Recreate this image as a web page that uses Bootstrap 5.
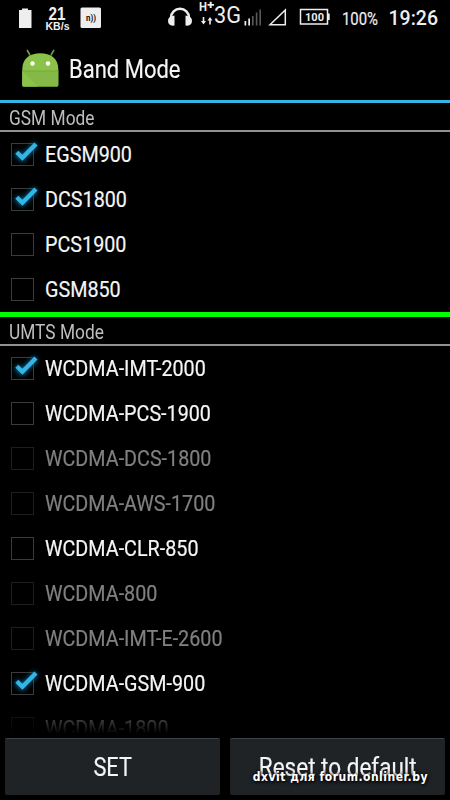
<!DOCTYPE html>
<html lang="en">
<head>
<meta charset="utf-8">
<meta name="viewport" content="width=device-width, initial-scale=1">
<title>Band Mode</title>
<link href="https://cdn.jsdelivr.net/npm/bootstrap@5.3.0/dist/css/bootstrap.min.css" rel="stylesheet">
<style>
html,body{height:100%}
body{background:#000;color:#f5f5f5;font-family:Roboto,"Liberation Sans",sans-serif;overflow:hidden}
.screen{width:450px;height:800px}
.status{height:36px;flex:none}
.status svg{display:block}
.titlebar{height:67px;flex:none;border-bottom:3px solid #33b5e5;padding:0 0 0 22px}
.narrow{display:inline-block;transform:scaleX(.88);transform-origin:0 50%;white-space:nowrap}
.title-text{font-size:25px;line-height:30px;margin-left:10px;padding-top:4px;-webkit-text-stroke:.15px}
.sect{height:29px;flex:none;padding:2px 0 0 9px;border-bottom:2px solid #929292;font-size:19.7px;line-height:27px;color:#bebebe}
.band{height:45px;flex:none;padding-left:11px;font-size:22.6px;line-height:45px}
.band .narrow{transform:translateY(.4px) scaleX(.874);-webkit-text-stroke:.2px}
.box{width:23px;height:23px;border:1px solid #3b3b3b;flex:none;margin-right:11px}
.box svg{display:block;overflow:visible;margin:-1px}
.off{color:#808080}
.off .box{border-color:#1e1e1e}
.green{height:5px;flex:none;background:#0f0}
.bands{height:387px;flex:none;-webkit-mask-image:linear-gradient(#000 358px,transparent 388px);mask-image:linear-gradient(#000 358px,transparent 388px)}
.actions{padding:5px;gap:10px}
.act{height:57px;background:#1f2326;border:0;border-top:1px solid #3f4346;border-radius:2px;color:#f5f5f5;font-size:25.6px;line-height:56px;padding:0}
.act .narrow{transform-origin:50% 50%;-webkit-text-stroke:.15px}
.act .short{transform:scaleX(.85)}
.watermark{right:22px;bottom:13px;font:bold 12px/20px "DejaVu Sans Condensed","DejaVu Sans",sans-serif;letter-spacing:.5px;color:#fff;text-shadow:1px 1px 3px #000,0 0 4px #000;white-space:nowrap}
</style>
<script src="https://cdn.jsdelivr.net/npm/bootstrap@5.3.0/dist/js/bootstrap.bundle.min.js"></script>
</head>
<body>
<svg width="0" height="0" class="position-absolute" aria-hidden="true">
<defs><filter id="glow" x="-50%" y="-50%" width="200%" height="200%"><feGaussianBlur stdDeviation="2.5"/></filter>
<g id="tick"><path d="M5.3 9.5L11 15.500L25 1" fill="none" stroke="#0876a8" stroke-width="5" filter="url(#glow)"/><path d="M5.800 9.300L11.400 14.800L25 1" fill="none" stroke="#33b5e5" stroke-width="4.300"/></g></defs>
</svg>
<main class="screen d-flex flex-column position-relative overflow-hidden">
<header class="status">
<svg width="450" height="36" fill="#eee" font-family="Roboto,sans-serif">
<path d="M19 10h3V8.500h6V10h3.500v18H19z"/>
<g font-family="Liberation Sans,sans-serif" font-weight="bold"><text x="48.500" y="19.500" font-size="18" textLength="17" lengthAdjust="spacingAndGlyphs">21</text><text x="45.500" y="30" font-size="10.500" textLength="24" lengthAdjust="spacingAndGlyphs">KB/s</text></g>
<rect x="80.500" y="7.500" width="20.500" height="20.500" rx="1.500"/>
<text x="86" y="21" font-size="9" font-weight="bold" fill="#111" textLength="10" lengthAdjust="spacingAndGlyphs">n))</text>
<path d="M171 19v-1.500a9 8.800 0 0 1 18 0v1.500" fill="none" stroke="#eee" stroke-width="2.500"/>
<path d="M174.500 15.500v10q-6.500 1-6.500-5q0-4 6.500-5zM185.500 15.500v10q6.500 1 6.500-5q0-4-6.500-5z"/>
<text x="199" y="11" font-size="12" font-weight="bold" textLength="8" lengthAdjust="spacingAndGlyphs">H</text>
<path d="M207.500 4h2.200V1.800h2V4h2.300v1.700h-2.300V8h-2V5.700h-2.200zM202.700 17h1.600v4h1.700l-2.500 3.500-2.500-3.500h1.700zM209.200 24.500h1.600V20.500h1.700L210 17l-2.500 3.500h1.700z"/>
<text x="214" y="22.500" font-size="24.500" textLength="27" lengthAdjust="spacingAndGlyphs">3G</text>
<path d="M244.500 21h1.700v4.500h-1.700zM248.300 18.500h1.700v7h-1.700z"/>
<path d="M252 16h1.600v9.500H252zM255.800 12.500h1.600v13h-1.600zM259.400 9.500h1.600v16h-1.600z" fill="#5a5a5a"/>
<path d="M270 24.800H285.300V10z" fill="none" stroke="#eee" stroke-width="1.500"/>
<path d="M300.500 9.500h27v14.500h-27z" fill="none" stroke="#eee" stroke-width="1.500"/><path d="M328 13.500h1.700v6.500H328z"/>
<text x="305" y="21" font-size="11" font-weight="bold" textLength="19" lengthAdjust="spacingAndGlyphs">100</text>
<text x="342" y="24.500" font-size="17.500" stroke="#eee" stroke-width=".2" textLength="36" lengthAdjust="spacingAndGlyphs">100%</text>
<text x="388.500" y="25" font-size="19.500" font-weight="500" textLength="49.500" lengthAdjust="spacingAndGlyphs">19:26</text>
</svg>
</header>
<div class="titlebar d-flex align-items-center">
<svg width="37" height="40" viewBox="0 0 37 40">
<path d="M8 7L5 2M29 7L32 2" stroke="#72a43b" stroke-width="1.500"/>
<path d="M.3 21C.3 10 8.500 5.200 18.300 5.200S36.300 10 36.300 21v16q0 1.500-1.500 1.500H1.800Q.3 38.500 .3 37z" fill="#8bc34a"/>
<path d="M.3 23h36v14q0 1.500-1.500 1.500H1.800Q.3 38.500 .3 37z" fill="#84b947"/><path d="M.5 23L16 38.500H1.800Q.3 38.500 .3 37z" fill="#8bc34a"/><path d="M.3 23h36" stroke="#76a83e" stroke-width="1"/>
<circle cx="10.500" cy="15.500" r="2.200" fill="#fff"/><circle cx="26" cy="15.500" r="2.200" fill="#fff"/>
</svg>
<h1 class="title-text fw-normal mb-0"><span class="narrow">Band Mode</span></h1>
</div>
<h2 class="sect fw-normal mb-0"><span class="narrow">GSM Mode</span></h2>
<label class="band d-flex align-items-center"><span class="box"><svg width="23" height="23"><use href="#tick"/></svg></span><span class="narrow">EGSM900</span></label>
<label class="band d-flex align-items-center"><span class="box"><svg width="23" height="23"><use href="#tick"/></svg></span><span class="narrow">DCS1800</span></label>
<label class="band d-flex align-items-center"><span class="box"></span><span class="narrow">PCS1900</span></label>
<label class="band d-flex align-items-center"><span class="box"></span><span class="narrow">GSM850</span></label>
<div class="green"></div>
<h2 class="sect fw-normal mb-0"><span class="narrow">UMTS Mode</span></h2>
<section class="bands overflow-hidden">
<label class="band d-flex align-items-center"><span class="box"><svg width="23" height="23"><use href="#tick"/></svg></span><span class="narrow">WCDMA-IMT-2000</span></label>
<label class="band d-flex align-items-center"><span class="box"></span><span class="narrow">WCDMA-PCS-1900</span></label>
<label class="band off d-flex align-items-center"><span class="box"></span><span class="narrow">WCDMA-DCS-1800</span></label>
<label class="band off d-flex align-items-center"><span class="box"></span><span class="narrow">WCDMA-AWS-1700</span></label>
<label class="band d-flex align-items-center"><span class="box"></span><span class="narrow">WCDMA-CLR-850</span></label>
<label class="band off d-flex align-items-center"><span class="box"></span><span class="narrow">WCDMA-800</span></label>
<label class="band off d-flex align-items-center"><span class="box"></span><span class="narrow">WCDMA-IMT-E-2600</span></label>
<label class="band d-flex align-items-center"><span class="box"><svg width="23" height="23"><use href="#tick"/></svg></span><span class="narrow">WCDMA-GSM-900</span></label>
<label class="band off d-flex align-items-center"><span class="box"></span><span class="narrow">WCDMA-1800</span></label>
</section>
<footer class="actions d-flex">
<button type="button" class="act btn w-50"><span class="narrow short">SET</span></button>
<button type="button" class="act btn w-50"><span class="narrow">Reset to default</span></button>
</footer>
<div class="watermark position-absolute">dxvit для forum.onliner.by</div>
</main>
</body>
</html>
